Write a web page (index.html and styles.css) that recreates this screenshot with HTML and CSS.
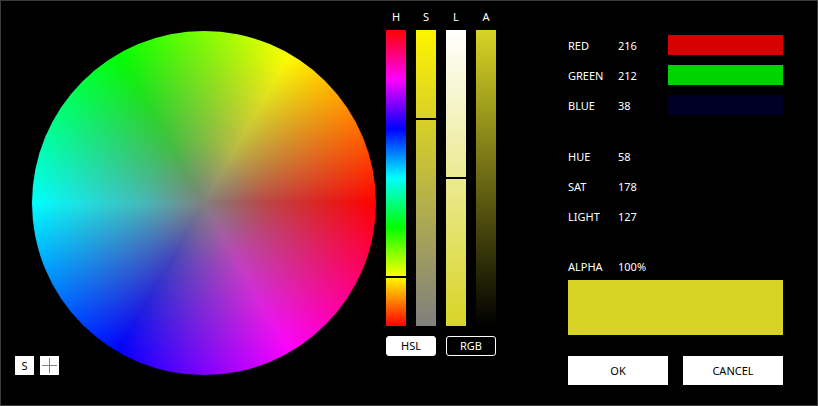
FILE: index.html
```html
<!DOCTYPE html>
<html>
<head>
<meta charset="utf-8">
<link rel="stylesheet" href="styles.css">
</head>
<body>
<div class="window">
  <div class="wheel-pane">
    <div class="wheel"></div>
  </div>
  <div class="tools">
    <div class="tool tool-s">S</div>
    <div class="tool tool-cross"><span class="cross-h"></span><span class="cross-v"></span></div>
  </div>
  <div class="slider-pane">
    <div class="slider-labels">
      <span>H</span><span>S</span><span>L</span><span>A</span>
    </div>
    <div class="sliders">
      <div class="slider slider-h"><div class="marker" style="top:246px"></div></div>
      <div class="slider slider-s"><div class="marker" style="top:88px"></div></div>
      <div class="slider slider-l"><div class="marker" style="top:147px"></div></div>
      <div class="slider slider-a"></div>
    </div>
    <div class="modes">
      <div class="mode mode-on">HSL</div>
      <div class="mode mode-off">RGB</div>
    </div>
  </div>
  <div class="info-pane">
    <div class="group rgb">
      <div class="row"><span class="lbl">RED</span><span class="val">216</span><span class="bar bar-r"></span></div>
      <div class="row"><span class="lbl">GREEN</span><span class="val">212</span><span class="bar bar-g"></span></div>
      <div class="row"><span class="lbl">BLUE</span><span class="val">38</span><span class="bar bar-b"></span></div>
    </div>
    <div class="group hsl">
      <div class="row"><span class="lbl">HUE</span><span class="val">58</span></div>
      <div class="row"><span class="lbl">SAT</span><span class="val">178</span></div>
      <div class="row"><span class="lbl">LIGHT</span><span class="val">127</span></div>
    </div>
    <div class="row alpha"><span class="lbl">ALPHA</span><span class="val">100%</span></div>
    <div class="swatch"></div>
    <div class="actions">
      <div class="btn">OK</div>
      <div class="btn">CANCEL</div>
    </div>
  </div>
</div>
</body>
</html>
```

FILE: styles.css
```css
* { box-sizing: border-box; }
html, body { margin: 0; padding: 0; background: #000; }
body {
  font-family: "Noto Sans", "Open Sans", sans-serif;
  font-size: 11px;
  color: #fff;
}
.window {
  position: relative;
  width: 818px;
  height: 406px;
  border: 1px solid #3c3c3c;
  background: #000;
  display: flex;
  align-items: flex-start;
}
.wheel-pane {
  padding: 30px 0 0 31px;
}
.wheel {
  width: 344px;
  height: 344px;
  border-radius: 50%;
  background:
    radial-gradient(circle closest-side, rgba(128,128,128,1) 0%, rgba(128,128,128,0.55) 35%, rgba(128,128,128,0) 100%),
    conic-gradient(from 90deg, #ff0000, #ff00ff, #0000ff, #00ffff, #00ff00, #ffff00, #ff0000);
}
.tools {
  position: absolute;
  left: 14px;
  top: 355px;
  display: flex;
  gap: 6px;
}
.tool {
  width: 19px;
  height: 19px;
  background: #fff;
  color: #000;
  display: flex;
  align-items: center;
  justify-content: center;
  font-size: 11px;
  position: relative;
}
.cross-h, .cross-v {
  position: absolute;
  background: #808080;
}
.cross-h { left: 2px; right: 2px; top: 9px; height: 1px; }
.cross-v { top: 2px; bottom: 2px; left: 9px; width: 1px; }

.slider-pane {
  margin-left: 10px;
  padding-top: 9px;
  display: flex;
  flex-direction: column;
  width: 110px;
}
.slider-labels {
  display: grid;
  grid-template-columns: repeat(4, 20px);
  column-gap: 10px;
  height: 14px;
  line-height: 14px;
  text-align: center;
  margin-bottom: 6px;
}
.sliders {
  display: grid;
  grid-template-columns: repeat(4, 20px);
  column-gap: 10px;
}
.slider {
  position: relative;
  height: 296px;
}
.slider-h {
  background: linear-gradient(to bottom, #ff0000, #ff00ff 16.67%, #0000ff 33.33%, #00ffff 50%, #00ff00 66.67%, #ffff00 83.33%, #ff0000);
}
.slider-s { background: linear-gradient(to bottom, #fff400, #7f7f7f); }
.slider-l { background: linear-gradient(to bottom, #ffffff, #d8d426); }
.slider-a { background: linear-gradient(to bottom, #d8d426, #000000); }
.marker {
  position: absolute;
  left: 0;
  right: -1px;
  height: 2px;
  background: #000;
}
.modes {
  margin-top: 10px;
  display: flex;
  gap: 10px;
}
.mode {
  width: 50px;
  height: 20px;
  line-height: 18px;
  text-align: center;
  font-size: 11px;
  border-radius: 3px;
}
.mode-on { background: #fff; color: #000; border: 1px solid #fff; }
.mode-off { background: #000; color: #fff; border: 1px solid #fff; }

.info-pane {
  margin-left: 72px;
  padding-top: 34px;
  display: flex;
  flex-direction: column;
  width: 215px;
}
.group {
  display: flex;
  flex-direction: column;
  gap: 10px;
}
.row {
  display: flex;
  align-items: center;
  height: 20px;
}
.lbl { width: 50px; }
.val { width: 50px; }
.bar { width: 115px; height: 20px; }
.bar-r { background: #d80000; }
.bar-g { background: #00d400; }
.bar-b { background: #000026; }
.hsl { margin-top: 31px; }
.alpha { margin-top: 30px; }
.swatch {
  margin-top: 4px;
  height: 55px;
  background: #d8d426;
}
.actions {
  margin-top: 21px;
  display: flex;
  gap: 15px;
}
.btn {
  width: 100px;
  height: 29px;
  background: #fff;
  color: #000;
  display: flex;
  align-items: center;
  justify-content: center;
  font-size: 11px;
}
```
